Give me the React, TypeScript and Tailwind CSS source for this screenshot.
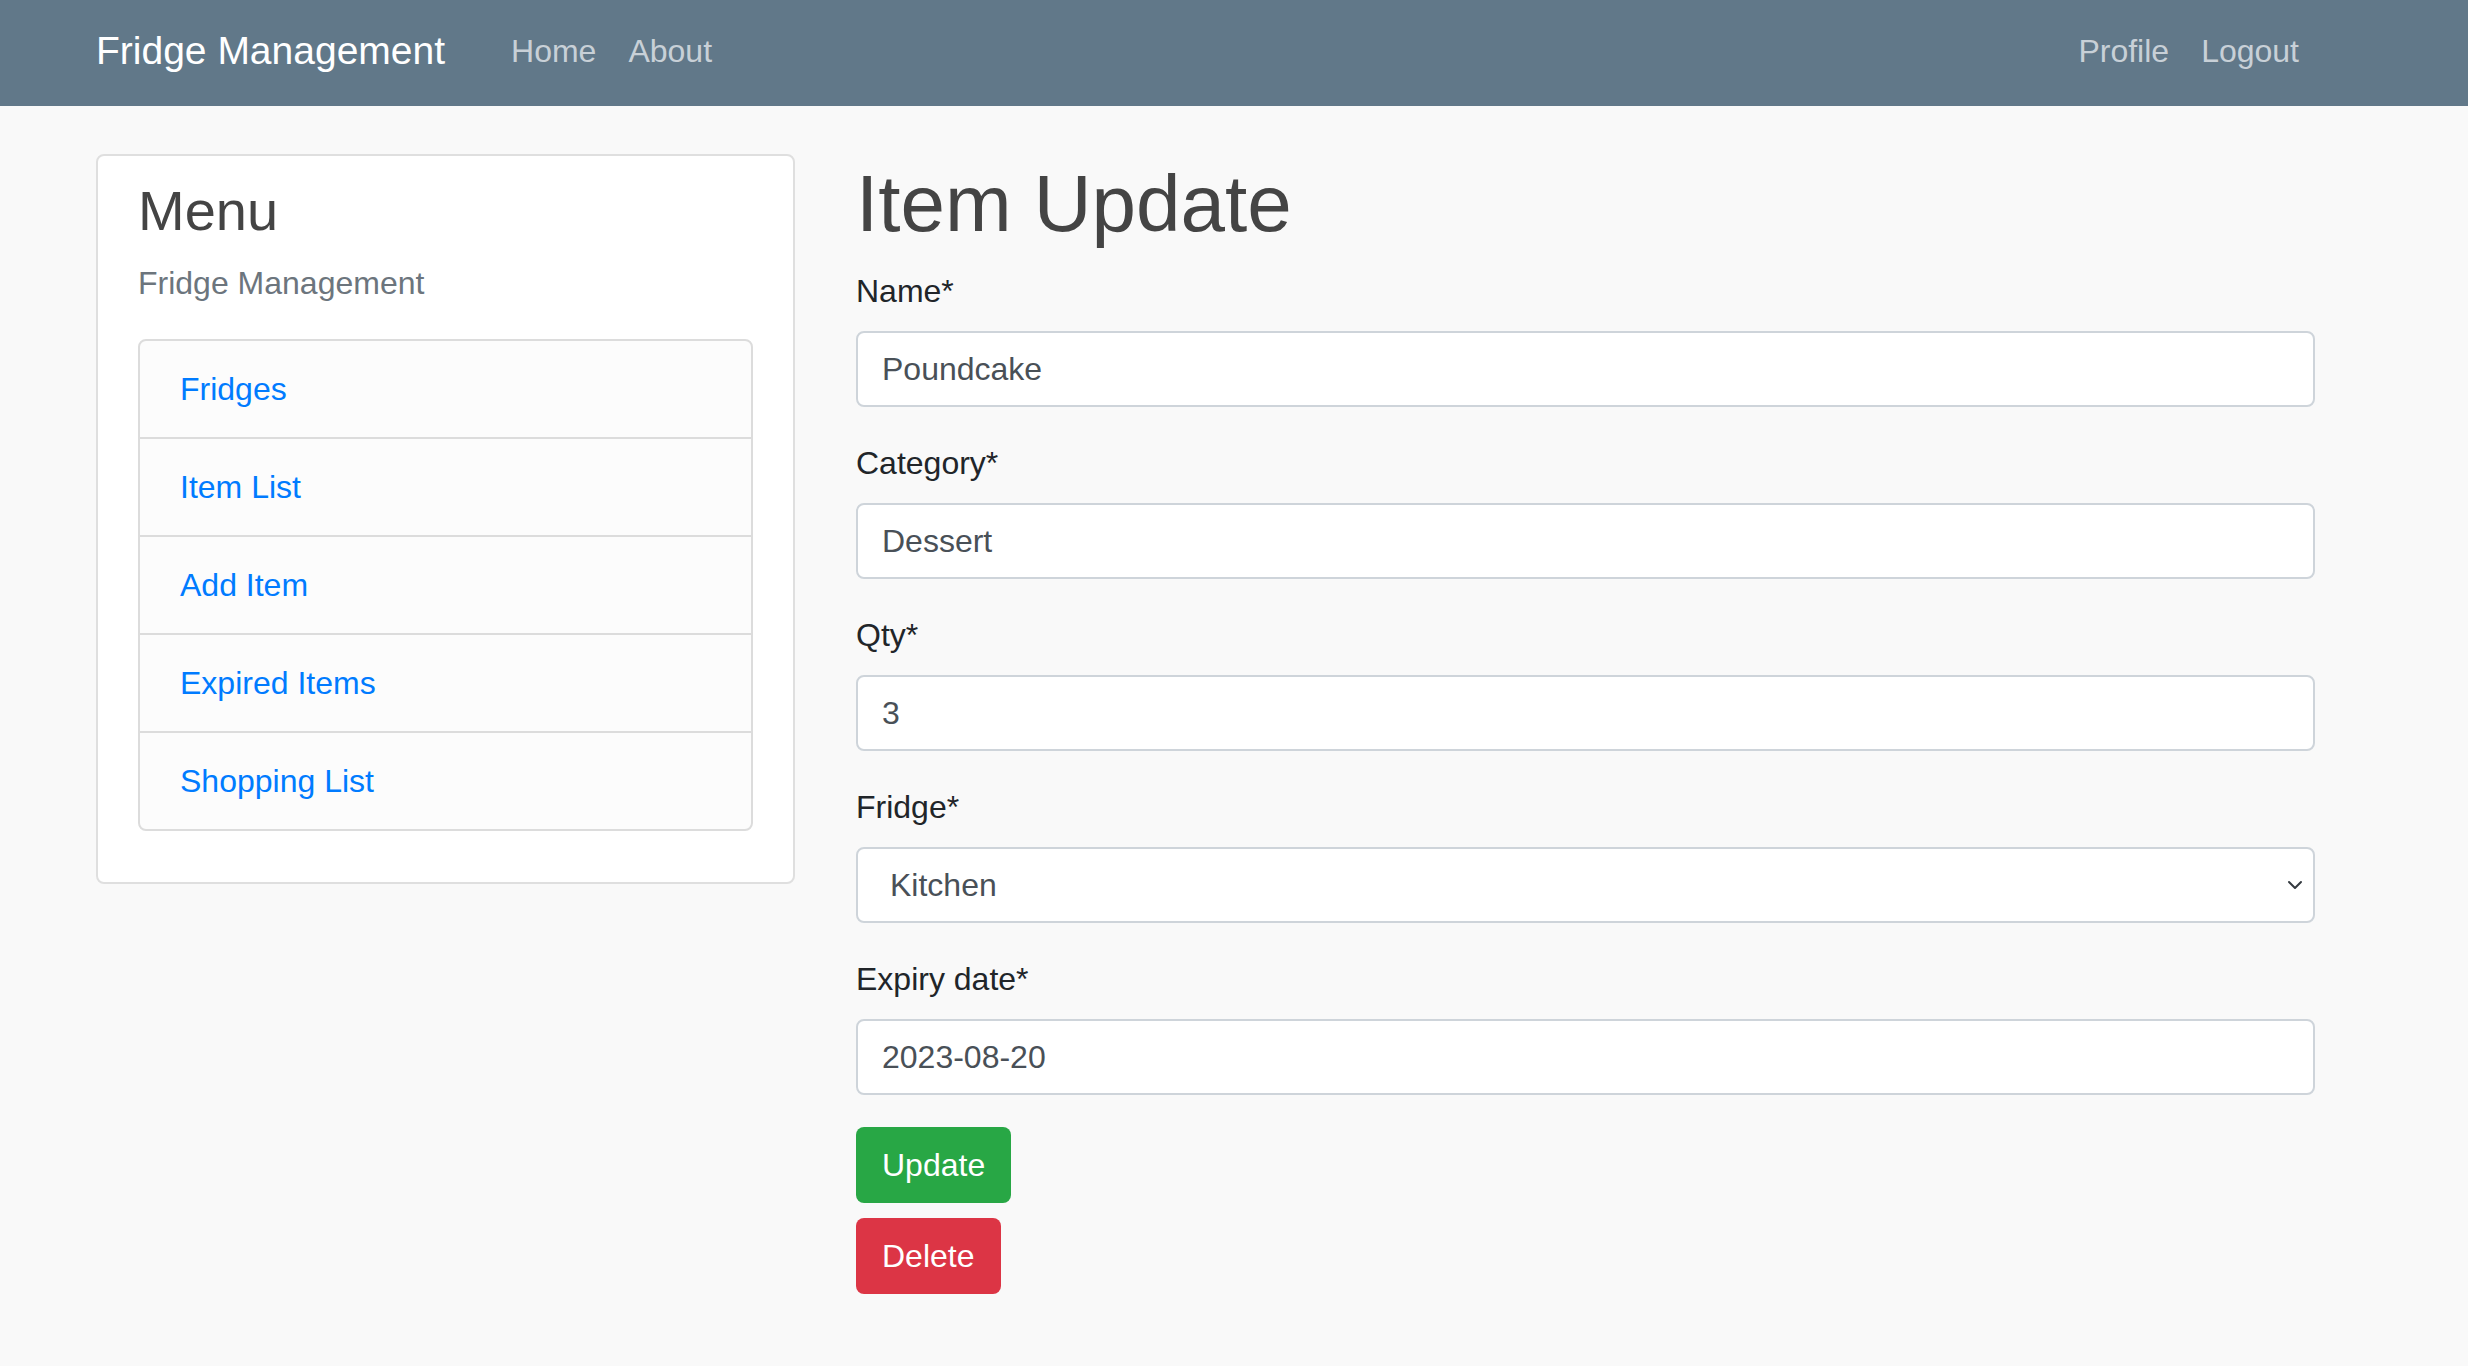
import { ChevronDown } from 'lucide-react';

const menuLinks = ['Fridges', 'Item List', 'Add Item', 'Expired Items', 'Shopping List'];

type FieldProps = {
  label: string;
  value: string;
};

function TextField({ label, value }: FieldProps) {
  return (
    <div className="mb-[32px]">
      <label className="mb-[16px] block text-[32px] leading-[48px] text-[#212529]">{label}</label>
      <input
        type="text"
        defaultValue={value}
        className="block h-[76px] w-full rounded-[8px] border-2 border-[#ced4da] bg-white px-[24px] text-[32px] text-[#495057] outline-none"
      />
    </div>
  );
}

function SelectField({ label, value }: FieldProps) {
  return (
    <div className="mb-[32px]">
      <label className="mb-[16px] block text-[32px] leading-[48px] text-[#212529]">{label}</label>
      <div className="relative">
        <select
          defaultValue={value}
          className="block h-[76px] w-full appearance-none rounded-[8px] border-2 border-[#ced4da] bg-white pr-[56px] pl-[32px] text-[32px] text-[#495057] outline-none"
        >
          <option>Kitchen</option>
          <option>Garage</option>
        </select>
        <ChevronDown
          className="pointer-events-none absolute top-[26px] right-[8px] h-[24px] w-[24px] text-[#343a40]"
          strokeWidth={2}
        />
      </div>
    </div>
  );
}

export default function App() {
  return (
    <div className="min-h-screen bg-[#f9f9f9] font-['Liberation_Sans',Arial,sans-serif]">
      <nav className="flex h-[106px] items-center bg-[#617889] pb-[4px] pl-[96px]">
        <a className="text-[39px] leading-[60px] text-white">Fridge Management</a>
        <div className="ml-[50px] flex">
          <a className="px-[16px] text-[32px] leading-[48px] text-[#c8d0d7]">Home</a>
          <a className="px-[16px] text-[32px] leading-[48px] text-[#c8d0d7]">About</a>
        </div>
        <div className="ml-auto mr-[153px] flex">
          <a className="px-[16px] text-[32px] leading-[48px] text-[#c8d0d7]">Profile</a>
          <a className="px-[16px] text-[32px] leading-[48px] text-[#c8d0d7]">Logout</a>
        </div>
      </nav>

      <main className="flex items-start pt-[48px] pl-[96px]">
        <aside className="w-[699px] rounded-[8px] border-2 border-[#dfdfdf] bg-white px-[40px] pt-[21px] pb-[51px]">
          <h3 className="text-[56px] leading-[1.2] text-[#444444]">Menu</h3>
          <p className="mt-[15px] text-[32px] leading-[48px] text-[#6c757d]">Fridge Management</p>
          <ul className="mt-[32px] rounded-[8px] border-2 border-[#dcdcdc] bg-[#fcfcfc]">
            {menuLinks.map((link, i) => (
              <li
                key={link}
                className={`px-[40px] py-[24px] text-[32px] leading-[48px] text-[#007bff] ${
                  i > 0 ? 'border-t-2 border-[#dcdcdc]' : ''
                }`}
              >
                <a>{link}</a>
              </li>
            ))}
          </ul>
        </aside>

        <section className="ml-[61px] w-[1459px]">
          <h1 className="mt-[4px] mb-[17px] text-[80px] leading-[92px] text-[#444444]">Item Update</h1>
          <TextField label="Name*" value="Poundcake" />
          <TextField label="Category*" value="Dessert" />
          <TextField label="Qty*" value="3" />
          <SelectField label="Fridge*" value="Kitchen" />
          <TextField label="Expiry date*" value="2023-08-20" />
          <button className="block h-[76px] rounded-[8px] bg-[#28a745] px-[26px] text-[32px] text-white">
            Update
          </button>
          <button className="mt-[15px] block h-[76px] rounded-[8px] bg-[#dc3545] px-[26px] text-[32px] text-white">
            Delete
          </button>
        </section>
      </main>
    </div>
  );
}
